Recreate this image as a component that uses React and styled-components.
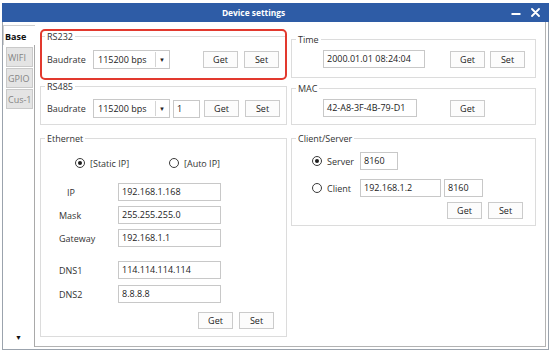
import React from 'react'
import styled, { createGlobalStyle } from 'styled-components'

const GlobalStyle = createGlobalStyle`
  html, body { margin: 0; padding: 0; background: #fff; }
  body {
    font-family: "Segoe UI", "Open Sans", sans-serif;
    font-size: 9px;
    color: #2a2a2a;
  }
`

const Window = styled.div`
  box-sizing: border-box;
  width: 547px;
  height: 347px;
  margin: 3px 0 0 2px;
  border: 1px solid #9ba3ad;
  border-top: none;
  display: flex;
  flex-direction: column;
  background: #fff;
`

const TitleBar = styled.div`
  height: 19px;
  background: #2e5ca6;
  color: #fff;
  display: flex;
  align-items: center;
  margin: 0 -1px;
`

const TitleText = styled.div`
  flex: 1;
  text-align: center;
  padding-right: 6px;
  font-weight: bold;
  font-size: 8.4px;
`

const TitleControls = styled.div`
  display: flex;
  align-items: center;
  gap: 10px;
  padding-right: 9px;
`

const Body = styled.div`
  flex: 1;
  display: flex;
  padding: 0 2px 2px 0;
  min-height: 0;
`

const TabStrip = styled.div`
  width: 32px;
  display: flex;
  flex-direction: column;
  padding-top: 3px;
`

const ActiveTab = styled.div`
  height: 20px;
  box-sizing: border-box;
  border-top: 1px solid #cfcfcf;
  border-left: 1px solid #cfcfcf;
  padding: 4px 0 0 1px;
  font-weight: bold;
  color: #111;
`

const TabRest = styled.div`
  flex: 1;
  display: flex;
  flex-direction: column;
  gap: 1px;
  border-right: 1px solid #a9a9a9;
  padding-top: 2px;
`

const Tab = styled.div`
  width: 27px;
  height: 20px;
  box-sizing: border-box;
  margin-left: 3px;
  border: 1px solid #c9c9c9;
  background: #e4e4e4;
  color: #858585;
  padding: 3px 0 0 1px;
`

const ScrollArrow = styled.div`
  margin-top: auto;
  margin-bottom: 5px;
  display: flex;
  justify-content: center;
  font-size: 7px;
  color: #111;
`

const Panel = styled.div`
  flex: 1;
  display: flex;
  gap: 4px;
  padding: 7px 0 0 5px;
  border-right: 1px solid #b3b3b3;
  border-bottom: 1px solid #b3b3b3;
`

const Column = styled.div`
  width: ${p => p.$w}px;
  display: flex;
  flex-direction: column;
  padding-top: ${p => p.$top || 0}px;
`

const Highlight = styled.div`
  box-sizing: border-box;
  height: 51px;
  border: 2px solid #e2392e;
  border-radius: 5px;
`

const Group = styled.fieldset`
  box-sizing: border-box;
  margin: ${p => p.$mt || 0}px 0 0 0;
  height: ${p => p.$h}px;
  padding: 0;
  border: 1px solid #dcdcdc;
  ${p => p.$bare && 'border-left: none; border-right: none; border-bottom: none;'}
  min-width: 0;
`

const Legend = styled.legend`
  margin-left: ${p => p.$ml ?? 4}px;
  padding: 0 2px;
  line-height: 11px;
  color: #333;
`

const GroupBody = styled.div`
  padding: 0 ${p => p.$pr || 0}px 0 ${p => p.$pl || 0}px;
  display: flex;
  flex-direction: column;
`

const Row = styled.div`
  display: flex;
  align-items: center;
  height: ${p => p.$h || 19}px;
  margin-top: ${p => p.$mt || 0}px;
  gap: ${p => p.$gap || 0}px;
`

const Label = styled.span`
  width: ${p => p.$w}px;
  padding-left: ${p => p.$indent || 0}px;
  box-sizing: border-box;
  color: #333;
  flex-shrink: 0;
`

const TextBox = styled.div`
  box-sizing: border-box;
  width: ${p => p.$w}px;
  height: 18px;
  border: 1px solid #c8c8c8;
  background: #fff;
  padding: 0 3px;
  line-height: 16px;
  color: #222;
  margin-left: ${p => p.$ml || 0}px;
  white-space: nowrap;
  overflow: hidden;
`

const Combo = styled.div`
  box-sizing: border-box;
  width: 77px;
  height: 19px;
  border: 1px solid #c8c8c8;
  display: flex;
  color: #222;
`

const ComboText = styled.div`
  flex: 1;
  padding-left: 4px;
  line-height: 17px;
`

const ComboButton = styled.div`
  width: 12px;
  border-left: 1px solid #d4d4d4;
  display: flex;
  align-items: center;
  justify-content: center;
  font-size: 6px;
  color: #222;
  margin: 1px 1px 1px 0;
`

const Buttons = styled.div`
  display: flex;
  gap: ${p => p.$gap || 6}px;
  width: ${p => (p.$gap || 6) + 70}px;
  margin-left: auto;
`

const Button = styled.div`
  box-sizing: border-box;
  width: 35px;
  height: 17px;
  border: 1px solid #cbcbcb;
  background: #fcfcfc;
  color: #222;
  display: flex;
  align-items: center;
  justify-content: center;
`

const RadioOption = styled.div`
  display: flex;
  align-items: center;
  gap: 5px;
  width: ${p => p.$w}px;
  flex-shrink: 0;
  color: #333;
`

const RadioDot = styled.span`
  box-sizing: border-box;
  width: 10px;
  height: 10px;
  border-radius: 50%;
  border: 1px solid #3a3a3a;
  background: #fff;
  display: flex;
  align-items: center;
  justify-content: center;
  &::after {
    content: '';
    width: 4px;
    height: 4px;
    border-radius: 50%;
    background: ${p => (p.$on ? '#1e1e1e' : 'transparent')};
  }
`

const Spacer = styled.span`
  width: ${p => p.$w}px;
  flex-shrink: 0;
`

const Radio = ({ on, w, children }) => (
  <RadioOption $w={w}>
    <RadioDot $on={on} />
    {children}
  </RadioOption>
)

const GetSet = ({ gap, noSet }) => (
  <Buttons $gap={gap}>
    <Button>Get</Button>
    {!noSet && <Button>Set</Button>}
  </Buttons>
)

const BaudCombo = () => (
  <Combo>
    <ComboText>115200 bps</ComboText>
    <ComboButton>▼</ComboButton>
  </Combo>
)

const ethernetRows = [
  { label: 'IP', value: '192.168.1.168', mt: 13, indent: 8 },
  { label: 'Mask', value: '255.255.255.0', mt: 5 },
  { label: 'Gateway', value: '192.168.1.1', mt: 5 },
  { label: 'DNS1', value: '114.114.114.114', mt: 14 },
  { label: 'DNS2', value: '8.8.8.8', mt: 6 },
]

export default function App() {
  return (
    <>
      <GlobalStyle />
      <Window>
        <TitleBar>
          <TitleText>Device settings</TitleText>
          <TitleControls>
            <svg width="10" height="10" viewBox="0 0 10 10">
              <rect x="0.5" y="5" width="9" height="2" fill="#fff" />
            </svg>
            <svg width="9" height="9" viewBox="0 0 9 9">
              <path d="M1 1 L8 8 M8 1 L1 8" stroke="#fff" strokeWidth="1.8" strokeLinecap="round" />
            </svg>
          </TitleControls>
        </TitleBar>

        <Body>
          <TabStrip>
            <ActiveTab>Base</ActiveTab>
            <TabRest>
              <Tab>WIFI</Tab>
              <Tab>GPIO</Tab>
              <Tab>Cus-1</Tab>
              <ScrollArrow>▼</ScrollArrow>
            </TabRest>
          </TabStrip>

          <Panel>
            <Column $w={247}>
              <Highlight>
                <Group $bare>
                  <Legend $ml={3}>RS232</Legend>
                  <GroupBody $pl={5} $pr={6}>
                    <Row $mt={8}>
                      <Label $w={46}>Baudrate</Label>
                      <BaudCombo />
                      <GetSet />
                    </Row>
                  </GroupBody>
                </Group>
              </Highlight>

              <Group $mt={1} $h={44}>
                <Legend>RS485</Legend>
                <GroupBody $pl={6} $pr={6}>
                  <Row $mt={7}>
                    <Label $w={46}>Baudrate</Label>
                    <BaudCombo />
                    <TextBox $w={27} $ml={3}>1</TextBox>
                    <GetSet />
                  </Row>
                </GroupBody>
              </Group>

              <Group $mt={8} $h={204}>
                <Legend>Ethernet</Legend>
                <GroupBody $pl={18} $pr={12}>
                  <Row $mt={12} $h={14}>
                    <Spacer $w={16} />
                    <Radio on w={94}>[Static IP]</Radio>
                    <Radio w={70}>[Auto IP]</Radio>
                  </Row>
                  {ethernetRows.map(r => (
                    <Row key={r.label} $mt={r.mt} $h={18}>
                      <Label $w={59} $indent={r.indent}>{r.label}</Label>
                      <TextBox $w={103}>{r.value}</TextBox>
                    </Row>
                  ))}
                  <Row $mt={9} $h={17}>
                    <GetSet />
                  </Row>
                </GroupBody>
              </Group>
            </Column>

            <Column $w={245} $top={5}>
              <Group $h={44}>
                <Legend>Time</Legend>
                <GroupBody $pl={31} $pr={10}>
                  <Row $mt={5} $h={18}>
                    <TextBox $w={102}>2000.01.01 08:24:04</TextBox>
                    <GetSet gap={5} />
                  </Row>
                </GroupBody>
              </Group>

              <Group $mt={5} $h={42}>
                <Legend>MAC</Legend>
                <GroupBody $pl={31} $pr={10}>
                  <Row $mt={5} $h={18}>
                    <TextBox $w={94}>42-A8-3F-4B-79-D1</TextBox>
                    <GetSet gap={5} noSet />
                  </Row>
                </GroupBody>
              </Group>

              <Group $mt={8} $h={93}>
                <Legend>Client/Server</Legend>
                <GroupBody $pl={20} $pr={12}>
                  <Row $mt={8} $h={18}>
                    <Radio on w={48}>Server</Radio>
                    <TextBox $w={38}>8160</TextBox>
                  </Row>
                  <Row $mt={9} $h={18}>
                    <Radio w={48}>Client</Radio>
                    <TextBox $w={81}>192.168.1.2</TextBox>
                    <TextBox $w={39} $ml={3}>8160</TextBox>
                  </Row>
                  <Row $mt={5} $h={17}>
                    <GetSet />
                  </Row>
                </GroupBody>
              </Group>
            </Column>
          </Panel>
        </Body>
      </Window>
    </>
  )
}
